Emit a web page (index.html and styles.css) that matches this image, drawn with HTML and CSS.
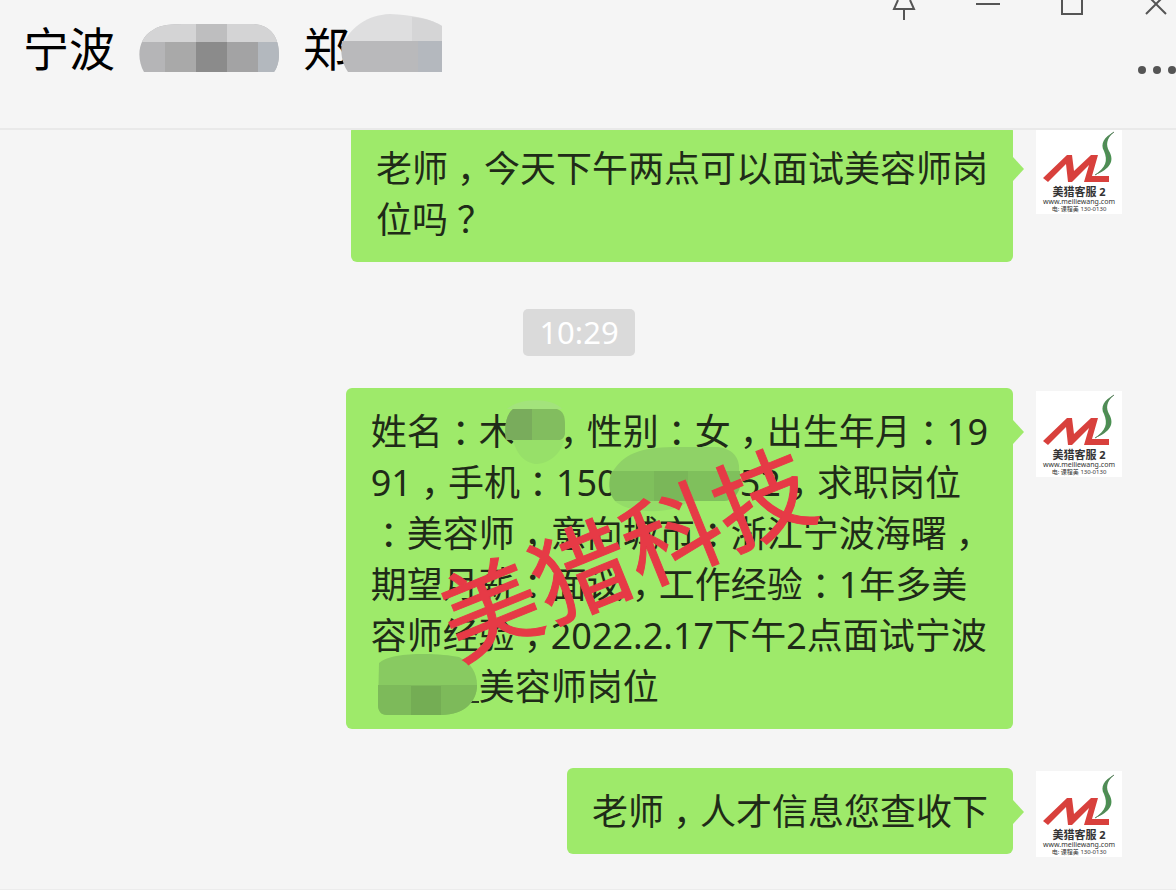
FILE: index.html
```html
<!DOCTYPE html>
<html lang="zh-CN">
<head>
    <meta charset="UTF-8">
    <title>聊天窗口</title>
    <link rel="stylesheet" href="styles.css">
</head>
<body>
<!-- 公用图形 -->
<svg class="defs" width="0" height="0" aria-hidden="true">
    <symbol id="logo" viewBox="0 0 86 58">
        <path d="M7 50 L31 27 H36 L38 43 L55 27 H62 L56 48 H73 V54 H48 L53 37 L36 54 H32 L30 36 L12 54 Z" fill="#d8403c"/>
        <path d="M78 4 C68 9 64 16 68 23 C72 33 70 39 59 47 C74 41 79 33 73 23 C70 17 70 11 78 4 Z" fill="#4b9152"/>
        <path d="M78 4 C69 10 67 16 71 23 C75 33 73 39 59 47" fill="none" stroke="#5d7f60" stroke-width="1"/>
    </symbol>
</svg>

<header class="header">
    <h1 class="title">
        <span>宁波</span>
        <svg class="title-mask" viewBox="0 0 140 48" aria-hidden="true">
            <clipPath id="c1"><path d="M5 48 C-3 34 -1 14 14 6 C22 0 34 0 60 0 H112 C132 0 140 14 140 30 C140 38 138 44 135 48 Z"/></clipPath>
            <g clip-path="url(#c1)">
                <rect width="140" height="48" fill="#b5b5b7"/>
                <rect width="140" height="18" fill="#d4d4d5"/>
                <rect x="57" width="31" height="18" fill="#bebebf"/>
                <rect x="26" y="18" width="31" height="30" fill="#a9a9a9"/>
                <rect x="57" y="18" width="31" height="30" fill="#8b8b8b"/>
                <rect x="88" y="18" width="31" height="30" fill="#a3a3a4"/>
                <rect x="119" y="18" width="21" height="30" fill="#b3b8be"/>
            </g>
        </svg>
        <span class="contact">郑
            <svg class="name-mask" viewBox="0 0 102 58" aria-hidden="true">
                <path d="M4 27 C12 14 26 1 50 0 C72 1 90 4 102 12 V27 Z" fill="#dededf"/>
                <path d="M72 3 C84 4 94 7 102 12 V27 H72 Z" fill="#d5d5d6"/>
                <path d="M2 27 H102 V58 H8 C2 50 0 38 2 27 Z" fill="#b9b9bb"/>
                <rect x="78" y="27" width="24" height="31" fill="#b4b8be"/>
            </svg>
        </span>
    </h1>
    <div class="tools">
        <div class="window-buttons">
            <button type="button" aria-label="置顶"><svg viewBox="0 0 24 22"><path d="M6 0 L2 9 H22 L18 0 M12 9 V20"/></svg></button>
            <button type="button" aria-label="最小化"><svg viewBox="0 0 24 22"><path d="M0 4 H24"/></svg></button>
            <button type="button" aria-label="最大化"><svg viewBox="0 0 24 22"><path d="M2 -4 V14 H22 V-4"/></svg></button>
            <button type="button" aria-label="关闭"><svg viewBox="0 0 24 22"><path d="M22 14 L2 -6 M2 14 L22 -6"/></svg></button>
        </div>
        <button class="more" type="button" aria-label="更多">
            <svg viewBox="0 0 38 8"><circle cx="4" cy="4" r="4"/><circle cx="19" cy="4" r="4"/><circle cx="34" cy="4" r="4"/></svg>
        </button>
    </div>
</header>

<main class="messages">
    <div class="message first">
        <p class="bubble">老师<i>，</i>今天下午两点可以面试美容师岗<br>位吗<i>？</i></p>
        <div class="avatar">
            <svg viewBox="0 0 86 58"><use href="#logo"/></svg>
            <b>美猎客服 2</b>
            <span class="site">www.meiliewang.com</span>
            <span class="phone">电: 课程美 130-0130</span>
        </div>
    </div>

    <time class="time">10:29</time>

    <div class="message">
        <p class="bubble">姓名<i>：</i>木<span class="mask one"><svg aria-hidden="true">
                <path d="M-8 3 C4 -8 36 -9 47 3 Z" fill="#a3e37c"/>
                <path d="M-2 34 H49 C46 48 34 58 20 58 C10 56 2 50 -2 34 Z" fill="#97e069"/>
                <path d="M-2 3 H42 C48 5 50 10 50 18 V28 C49 32 47 34 43 34 H-9 C-11 20 -9 9 -2 3 Z" fill="#82bd5f"/>
                <path d="M-2 3 H17 V34 H-9 C-11 20 -9 9 -2 3 Z" fill="#79ac5c"/>
            </svg></span><i>，</i>性别<i>：</i>女<i>，</i>出生年月<i>：</i>19<br>
            91<i>，</i>手机<i>：</i>150<span class="mask two"><svg aria-hidden="true">
                <path d="M-5 14 C8 -6 28 -10 60 -10 H100 C116 -8 122 2 121 14 Z" fill="#8fd267"/>
                <path d="M-3 44 H70 C60 57 12 58 -3 44 Z" fill="#94dc68"/>
                <path d="M-6 14 H122 V30 C120 38 114 44 106 44 H-3 C-10 36 -10 24 -6 14 Z" fill="#7fc05c"/>
                <rect x="36" y="14" width="34" height="30" fill="#7ab759"/>
            </svg></span>52<i>，</i>求职岗位<br>
            <i>：</i>美容师<i>，</i>意向城市<i>：</i>浙江宁波海曙<i>，</i><br>
            期望月薪<i>：</i>面议<i>，</i>工作经验<i>：</i>1年多美<br>
            容师经验<i>，</i>2022.2.17下午2点面试宁波<br>
            <span class="mask three"><svg aria-hidden="true">
                <path d="M98 41 H108" stroke="#2b3a20" stroke-width="2"/>
                <path d="M8 2 C20 -10 70 -8 88 -4 C100 2 106 12 106 24 C106 40 94 54 70 54 H16 C10 54 7 50 7 44 Z" fill="#88ca61"/>
                <path d="M7 24 H106 C106 40 94 54 70 54 H16 C10 54 7 50 7 44 Z" fill="#7dba5a"/>
                <rect x="40" y="25" width="30" height="29" fill="#74ad54"/>
            </svg></span>美容师岗位
            <strong class="watermark">美猎科技</strong>
        </p>
        <div class="avatar">
            <svg viewBox="0 0 86 58"><use href="#logo"/></svg>
            <b>美猎客服 2</b>
            <span class="site">www.meiliewang.com</span>
            <span class="phone">电: 课程美 130-0130</span>
        </div>
    </div>

    <div class="message">
        <p class="bubble">老师<i>，</i>人才信息您查收下</p>
        <div class="avatar">
            <svg viewBox="0 0 86 58"><use href="#logo"/></svg>
            <b>美猎客服 2</b>
            <span class="site">www.meiliewang.com</span>
            <span class="phone">电: 课程美 130-0130</span>
        </div>
    </div>
</main>
</body>
</html>
```
FILE: styles.css
```css
* {
    box-sizing: border-box;
}
body {
    margin: 0;
    background: #f5f5f5;
    color: #1f2b18;
    font-family: "Noto Sans", "Noto Sans CJK SC", sans-serif;
    overflow: hidden;
}
.defs {
    position: absolute;
}
button {
    padding: 0;
    border: none;
    background: none;
    cursor: pointer;
}

/* 顶部标题栏 */
.header {
    position: relative;
    z-index: 1;
    display: flex;
    justify-content: space-between;
    height: 130px;
    border-bottom: 2px solid #e9e9e9;
    background: #f5f5f5;
}
.title {
    display: flex;
    align-items: center;
    gap: 24px;
    height: 96px;
    margin: 0;
    padding-left: 23px;
    color: #000;
    font-size: 46px;
    font-weight: 400;
    line-height: 60px;
}
.title-mask {
    width: 140px;
    height: 48px;
}
.contact {
    position: relative;
}
.name-mask {
    position: absolute;
    left: 37px;
    top: -4px;
    width: 102px;
    height: 58px;
}
.tools {
    display: flex;
    flex-direction: column;
    align-items: flex-end;
    gap: 44px;
}
.window-buttons {
    display: flex;
    gap: 60px;
    padding-right: 8px;
}
.window-buttons svg {
    display: block;
    width: 24px;
    height: 22px;
    fill: none;
    stroke: #555;
    stroke-width: 2;
}
.more svg {
    display: block;
    width: 38px;
    height: 8px;
    fill: #555;
}

/* 消息列表 */
.messages {
    display: flex;
    flex-direction: column;
    padding-bottom: 32px;
    margin-top: -5px;
    border-bottom: 2px solid #ececec;
}
.message {
    display: flex;
    justify-content: flex-end;
    align-items: flex-start;
    gap: 23px;
    margin-bottom: 39px;
    padding-right: 54px;
}
.message:last-child {
    margin-bottom: 0;
}
.first {
    margin-bottom: 47px;
}
.bubble {
    position: relative;
    margin: 0;
    padding: 18px 25px 17px;
    border-radius: 6px;
    background: #9eea6a;
    font-size: 36px;
    line-height: 51px;
    white-space: nowrap;
}
.bubble::after {
    content: "";
    position: absolute;
    left: 100%;
    top: 32px;
    border: 12px solid transparent;
    border-left: 11px solid #9eea6a;
    border-right: none;
}
/* 标点居中 */
.bubble i {
    display: inline-block;
    width: 36px;
    font-family: "Noto Sans CJK SC", sans-serif;
    font-feature-settings: "halt";
    font-style: normal;
    line-height: 1;
    text-align: center;
}
.time {
    align-self: center;
    margin: 0 18px 32px 0;
    padding: 0 16px;
    border-radius: 5px;
    background: #dadada;
    color: #fff;
    font-size: 31px;
    line-height: 47px;
}

/* 马赛克 */
.mask {
    display: inline-block;
    height: 51px;
    vertical-align: top;
}
.mask svg {
    display: block;
    width: 100%;
    height: 51px;
    overflow: visible;
}
.one {
    width: 36px;
}
.two {
    width: 122px;
}
.three {
    width: 108px;
}

.watermark {
    position: absolute;
    left: 42%;
    top: 48%;
    color: #e63a46;
    font-size: 98px;
    font-weight: 400;
    line-height: 1;
    -webkit-text-stroke: 1px #e63a46;
    transform: translate(-50%, -50%) rotate(-22deg);
}

/* 头像 */
.avatar {
    display: flex;
    flex-direction: column;
    align-items: center;
    width: 86px;
    height: 86px;
    margin-top: 3px;
    background: #fff;
    color: #333;
    white-space: nowrap;
}
.avatar svg {
    display: block;
    width: 86px;
    height: 58px;
}
.avatar b {
    font-size: 11px;
    line-height: 12px;
}
.site {
    font-size: 7px;
    line-height: 8px;
}
.phone {
    font-size: 6px;
    line-height: 6px;
}
```
